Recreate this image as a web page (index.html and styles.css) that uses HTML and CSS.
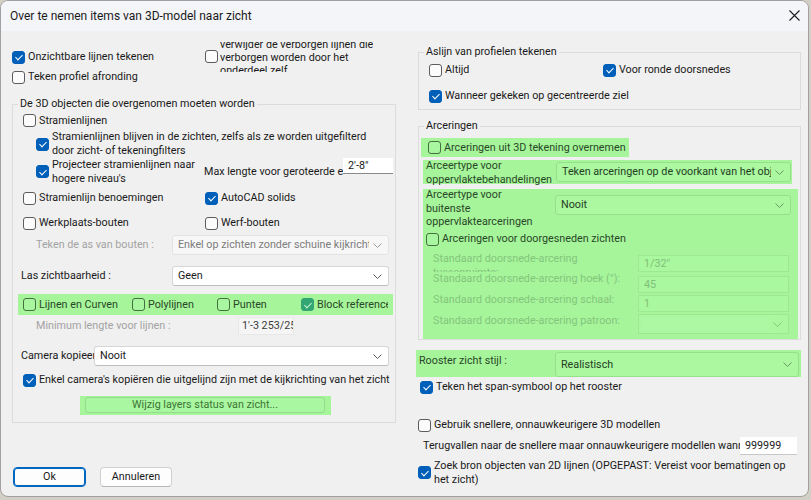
FILE: index.html
```html
<!DOCTYPE html>
<html lang="nl">
<head>
<meta charset="utf-8">
<title>Over te nemen items van 3D-model naar zicht</title>
<link rel="stylesheet" href="styles.css">
</head>
<body>
<div class="win">
  <div class="titlebar">
    <span class="title">Over te nemen items van 3D-model naar zicht</span>
    <svg class="close" width="11" height="11" viewBox="0 0 11 11"><path d="M0.5 0.5L10.5 10.5M10.5 0.5L0.5 10.5" stroke="#1b1b1b" stroke-width="1.1" fill="none"/></svg>
  </div>
  <div class="content">
    <div class="col-left">
      <div class="top">
        <div class="top-l">
          <div class="row"><span class="cb on"></span><span>Onzichtbare lijnen tekenen</span></div>
          <div class="row mt6"><span class="cb"></span><span>Teken profiel afronding</span></div>
        </div>
        <div class="top-r">
          <span class="cb"></span>
          <div class="clip3"><div class="clip3-in">verwijder de verborgen lijnen die<br>verborgen worden door het<br>onderdeel zelf</div></div>
        </div>
      </div>

      <fieldset class="grp">
        <legend>De 3D objecten die overgenomen moeten worden</legend>
        <div class="row r-strm"><span class="cb"></span><span>Stramienlijnen</span></div>
        <div class="row sub1"><span class="cb on"></span><span>Stramienlijnen blijven in de zichten, zelfs als ze worden uitgefilterd<br>door zicht- of tekeningfilters</span></div>
        <div class="sub2">
          <div class="sub2-l"><span class="cb on"></span><span>Projecteer stramienlijnen naar<br>hogere niveau's</span></div>
          <div class="maxl">Max lengte voor geroteerde elementen</div>
          <div class="inp">2'-8"</div>
        </div>
        <div class="r2 h26">
          <div class="c1 row"><span class="cb"></span><span>Stramienlijn benoemingen</span></div>
          <div class="row"><span class="cb on"></span><span>AutoCAD solids</span></div>
        </div>
        <div class="r2 h24">
          <div class="c1 row"><span class="cb"></span><span>Werkplaats-bouten</span></div>
          <div class="row"><span class="cb"></span><span>Werf-bouten</span></div>
        </div>
        <div class="frow">
          <span class="flab dis l-teken">Teken de as van bouten :</span>
          <div class="dd dd-dis w217"><span class="dd-t">Enkel op zichten zonder schuine kijkrichting</span><svg class="chev" width="9" height="5" viewBox="0 0 9 5"><path d="M0.5 0.5L4.5 4.5L8.5 0.5" fill="none" stroke="#9a9a9a" stroke-width="1"/></svg></div>
        </div>
        <div class="frow mt11">
          <span class="flab l-las">Las zichtbaarheid :</span>
          <div class="dd w217"><span class="dd-t">Geen</span><svg class="chev" width="9" height="5" viewBox="0 0 9 5"><path d="M0.5 0.5L4.5 4.5L8.5 0.5" fill="none" stroke="#5a5a5a" stroke-width="1"/></svg></div>
        </div>
        <div class="gl-row">
          <div class="row gi w109"><span class="cb g"></span><span>Lijnen en Curven</span></div>
          <div class="row gi w85"><span class="cb g"></span><span>Polylijnen</span></div>
          <div class="row gi w84"><span class="cb g"></span><span>Punten</span></div>
          <div class="row gi w87"><span class="cb g on"></span><span>Block references</span></div>
        </div>
        <div class="frow minrow">
          <span class="flab dis l-min">Minimum lengte voor lijnen :</span>
          <div class="minbox"><span>1'-3 253/256"</span></div>
        </div>
        <div class="frow mt11">
          <span class="flab l-cam">Camera kopieeren</span>
          <div class="dd w295"><span class="dd-t">Nooit</span><svg class="chev" width="9" height="5" viewBox="0 0 9 5"><path d="M0.5 0.5L4.5 4.5L8.5 0.5" fill="none" stroke="#5a5a5a" stroke-width="1"/></svg></div>
        </div>
        <div class="row r-enkel"><span class="cb on"></span><span>Enkel camera's kopiëren die uitgelijnd zijn met de kijkrichting van het zicht</span></div>
        <div class="gbtn-wrap"><div class="gbtn">Wijzig layers status van zicht...</div></div>
      </fieldset>

      <div class="btns">
        <div class="btn ok">Ok</div>
        <div class="btn cancel">Annuleren</div>
      </div>
    </div>

    <div class="col-right">
      <fieldset class="grp grp-r1">
        <legend>Aslijn van profielen tekenen</legend>
        <div class="r2 r-alt">
          <div class="c1r row"><span class="cb"></span><span>Altijd</span></div>
          <div class="row"><span class="cb on"></span><span>Voor ronde doorsnedes</span></div>
        </div>
        <div class="row r-wan"><span class="cb on"></span><span>Wanneer gekeken op gecentreerde ziel</span></div>
      </fieldset>

      <fieldset class="grp grp-r2">
        <legend>Arceringen</legend>
        <div class="row g1"><span class="cb g"></span><span>Arceringen uit 3D tekening overnemen</span></div>
        <div class="g2">
          <div class="glab">Arceertype voor<br>oppervlaktebehandelingen</div>
          <div class="dd gdd w235"><span class="dd-t">Teken arceringen op de voorkant van het object</span><svg class="chev" width="9" height="5" viewBox="0 0 9 5"><path d="M0.5 0.5L4.5 4.5L8.5 0.5" fill="none" stroke="#6a9a64" stroke-width="1"/></svg></div>
        </div>
        <div class="g3">
          <div class="glab">Arceertype voor<br>buitenste<br>oppervlaktearceringen</div>
          <div class="dd gdd w236"><span class="dd-t">Nooit</span><svg class="chev" width="9" height="5" viewBox="0 0 9 5"><path d="M0.5 0.5L4.5 4.5L8.5 0.5" fill="none" stroke="#6a9a64" stroke-width="1"/></svg></div>
        </div>
        <div class="g4">
          <div class="row g4-cb"><span class="cb g"></span><span>Arceringen voor doorgesneden zichten</span></div>
          <div class="f f1"><div class="flab2 clip">Standaard doorsnede-arcering<br>tussenruimte:</div><div class="gbox">1/32"</div></div>
          <div class="f f2"><div class="flab2">Standaard doorsnede-arcering hoek (°):</div><div class="gbox">45</div></div>
          <div class="f f3"><div class="flab2">Standaard doorsnede-arcering schaal:</div><div class="gbox">1</div></div>
          <div class="f f4"><div class="flab2">Standaard doorsnede-arcering patroon:</div><div class="gbox gsel"><span class="gsel-in"></span><svg class="chev" width="9" height="5" viewBox="0 0 9 5"><path d="M0.5 0.5L4.5 4.5L8.5 0.5" fill="none" stroke="#86c47f" stroke-width="1"/></svg></div></div>
        </div>
      </fieldset>

      <div class="g5">
        <div class="g5lab">Rooster zicht stijl :</div>
        <div class="dd gdd w244"><span class="dd-t">Realistisch</span><svg class="chev" width="9" height="5" viewBox="0 0 9 5"><path d="M0.5 0.5L4.5 4.5L8.5 0.5" fill="none" stroke="#6a9a64" stroke-width="1"/></svg></div>
      </div>
      <div class="row r-span"><span class="cb on"></span><span>Teken het span-symbool op het rooster</span></div>
      <div class="row r-geb"><span class="cb"></span><span>Gebruik snellere, onnauwkeurigere 3D modellen</span></div>
      <div class="r-ter">
        <div class="terlab">Terugvallen naar de snellere maar onnauwkeurigere modellen wanneer</div>
        <div class="inp inp2">999999</div>
      </div>
      <div class="row r-zoek"><span class="cb on"></span><span>Zoek bron objecten van 2D lijnen (OPGEPAST: Vereist voor bematingen op<br>het zicht)</span></div>
    </div>
  </div>
</div>
</body>
</html>
```

FILE: styles.css
```css
* { box-sizing: border-box; }
html, body { margin: 0; }
body {
  background: #d4cfc5;
  font-family: Roboto, "Noto Sans", sans-serif;
  font-size: 10.75px;
  line-height: 14px;
  color: #1a1a1a;
}
.win {
  width: 809px;
  height: 497px;
  background: #f0f0f0;
  border: 1px solid #a0a0a0;
  border-radius: 8px;
  overflow: hidden;
}
.titlebar {
  height: 30px;
  background: #f4f5f9;
  display: flex;
  align-items: center;
  justify-content: space-between;
  padding: 0 8px 0 9px;
}
.title { font-size: 12px; color: #1a1a1a; }
.close { display: block; margin-top: -2px; }

.content { display: flex; padding-left: 11px; }
.col-left { width: 384px; display: flex; flex-direction: column; }
.col-right { width: 383px; margin-left: 22px; display: flex; flex-direction: column; }

.row { display: flex; align-items: center; white-space: nowrap; }
.cb {
  width: 13px; height: 13px; flex: none;
  border: 1px solid #5c5c5c;
  border-radius: 3px;
  background: #fbfbfb;
  margin-right: 3px;
  position: relative;
}
.cb.on { background: #005fb8; border-color: #005fb8; }
.cb.on::after {
  content: "";
  position: absolute;
  left: 3.5px; top: 1.5px;
  width: 3px; height: 6px;
  border: solid #fff;
  border-width: 0 1.1px 1.1px 0;
  transform: rotate(45deg);
}
.cb.g { background: #a9f6a0; border-color: #44703f; }
.cb.g.on { background: #33a673; border-color: #33a673; }
.cb.g.on::after { border-color: #c8f5d8; }

.mt6 { margin-top: 6px; }
.mt11 { margin-top: 11px; }

/* top block */
.top { height: 66px; display: flex; }
.top-l { width: 193px; padding-top: 19px; }
.top-l .row { height: 14px; }
.top-r { display: flex; padding-top: 11px; }
.top-r .cb { margin-top: 8px; margin-right: 2px; }
.clip3 { height: 30px; overflow: hidden; line-height: 13px; white-space: nowrap; }
.clip3-in { margin-top: -4.5px; }

/* group boxes */
.grp { margin: 0; padding: 0 0 7px 0; border: 1px solid #dcdcdc; min-width: 0; }
.grp legend { padding: 0 2px; margin-left: 5px; line-height: 14px; height: 14px; }

.r-strm { height: 19px; margin-left: 10px; }
.sub1 { margin-left: 23px; height: 28px; line-height: 14px; }
.sub2 { display: flex; height: 27px; }
.sub2-l { width: 168px; margin-left: 23px; display: flex; align-items: center; line-height: 13.5px; white-space: nowrap; }
.maxl { width: 139px; overflow: hidden; white-space: nowrap; align-self: center; margin-top: 1px; }
.inp {
  width: 50px; height: 16px; background: #fff;
  border-bottom: 1px solid #8a8a8a;
  padding-left: 5px; line-height: 15px; white-space: nowrap; overflow: hidden;
}
.r2 { display: flex; align-items: center; margin-left: 10px; }
.r2 .c1 { width: 182px; }
.h26 { height: 26px; }
.h24 { height: 24px; }

.frow { display: flex; align-items: center; height: 20px; }
.flab { white-space: nowrap; overflow: hidden; flex: none; }
.dis { color: #a3a3a3; }
.l-teken { margin-left: 23px; width: 136px; }
.l-las { margin-left: 8px; width: 151px; }
.l-min { margin-left: 23px; width: 202px; }
.l-cam { margin-left: 8px; width: 73px; }

.dd {
  height: 20px;
  background: #fff;
  border: 1px solid #d6d6d6;
  border-bottom-color: #bdbdbd;
  border-radius: 3px;
  display: flex; align-items: center; justify-content: space-between;
  padding: 0 6px 0 5px;
  flex: none;
}
.dd-t { white-space: nowrap; overflow: hidden; flex: 1; min-width: 0; }
.chev { flex: none; margin-left: 4px; display: block; }
.dd-dis { background: #f7f7f7; border-color: #e3e3e3; color: #7c7c7c; }
.w217 { width: 217px; }
.w295 { width: 295px; }
.w235 { width: 235px; }
.w236 { width: 236px; }
.w244 { width: 244px; }

.gl-row {
  display: flex; align-items: center;
  margin-top: 8px; margin-left: 5px;
  width: 375px; height: 21px;
  padding-left: 5px;
  background: #a6f59b;
  color: #2a4828;
}
.gi { overflow: hidden; flex: none; }
.w109 { width: 109px; }
.w85 { width: 85px; }
.w84 { width: 84px; }
.w87 { width: 87px; }

.minrow { height: 18px; margin-top: 2px; }
.minbox {
  width: 56px; height: 18px;
  background: #f5f5f5; border: 1px solid #e8e8e8;
  color: #3c3c3c; overflow: hidden; white-space: nowrap;
  padding-left: 3px; line-height: 16px;
}
.r-enkel { height: 18px; margin-top: 5px; margin-left: 10px; }
.gbtn-wrap {
  margin-top: 7px; margin-left: 67px;
  width: 251px; height: 19px;
  background: #a6f59b;
  padding: 1px 6px 2px 5px;
}
.gbtn {
  height: 16px;
  border: 1px solid #93dc8b;
  border-radius: 3px;
  background: #a9f7a0;
  color: #3c7536;
  text-align: center;
  line-height: 14px;
}

.btns { display: flex; margin-top: 44px; margin-left: 1px; }
.btn {
  height: 20px; line-height: 18px; text-align: center;
  border-radius: 4px; background: #fdfdfd;
  border: 1px solid #d0d0d0; border-bottom-color: #b8b8b8;
}
.btn.ok { width: 73px; border: 1px solid #0067c0; box-shadow: inset 0 0 0 1px #0067c0; }
.btn.cancel { width: 72px; margin-left: 14px; }

/* right column */
.grp-r1 { margin-top: 14px; padding-bottom: 6px; }
.r-alt { margin-top: 4px; height: 14px; }
.c1r { width: 174px; }
.r-wan { margin-top: 12px; height: 14px; margin-left: 10px; }

.grp-r2 { margin-top: 9px; padding-bottom: 0; }
.g1 {
  margin-top: 5px; margin-left: 2px;
  width: 208px; height: 19px;
  padding-left: 7px;
  background: #a6f59b; color: #2a4828;
}
.g2, .g3 {
  display: flex; align-items: flex-start;
  margin-left: 4px; width: 375px;
  background: #a6f59b; color: #2a4828;
}
.g2 { margin-top: 3px; height: 24px; width: 369px; }
.g3 { margin-top: 5px; height: 38px; }
.glab { width: 133px; padding-left: 3px; line-height: 13.5px; margin-top: -1px; white-space: nowrap; flex: none; }
.g3 .glab { width: 132px; }
.gdd { background: #abf8a1; border: 1px solid #94e08b; color: #24401f; }
.g2 .gdd { margin-top: 2px; }
.g3 .gdd { margin-top: 6px; }
.g4 {
  margin-left: 4px; width: 375px; height: 112px;
  background: #a6f59b; color: #2a4828;
  display: flex; flex-direction: column;
}
.g4-cb { margin-top: 5px; height: 14px; padding-left: 3px; }
.f { display: flex; align-items: flex-start; margin-left: 10px; flex: none; }
.flab2 { width: 205px; white-space: nowrap; color: #84c67c; line-height: 14px; flex: none; overflow: hidden; }
.gbox {
  width: 151px; height: 17px;
  border: 1px solid #9de893;
  background: #a9f79f;
  color: #80c079;
  padding-left: 5px; line-height: 15px;
}
.f1 { margin-top: 9px; height: 17px; }
.f1 .flab2 { margin-top: -3px; height: 20px; }
.f2 { margin-top: 4px; height: 17px; }
.f2 .flab2 { margin-top: -4px; }
.f3 { margin-top: 2px; height: 17px; }
.f3 .flab2 { margin-top: -2px; }
.f4 { margin-top: 2px; height: 20px; }
.f4 .gbox { height: 20px; }
.gsel { display: flex; align-items: center; justify-content: space-between; padding: 2px 6px 2px 2px; }
.gsel-in { width: 130px; height: 14px; background: #adf9a3; }

.g5 {
  display: flex; align-items: flex-start;
  margin-top: 10px; margin-left: -2px;
  width: 385px; height: 27px;
  background: #a6f59b; color: #2a4828;
}
.g5lab { width: 139px; padding-left: 3px; margin-top: 4px; white-space: nowrap; flex: none; }
.g5 .gdd { height: 25px; margin-top: 2px; }

.r-span { margin-top: 3px; height: 14px; margin-left: 2px; }
.r-geb { margin-top: 24px; height: 14px; }
.r-ter { display: flex; align-items: center; margin-top: 5px; height: 18px; }
.terlab { width: 322px; padding-left: 5px; white-space: nowrap; overflow: hidden; flex: none; }
.inp2 { width: 57px; height: 18px; line-height: 17px; border-bottom: 1px solid #c8c8c8; }
.r-zoek { margin-top: 4px; height: 27px; line-height: 13.5px; }
```
